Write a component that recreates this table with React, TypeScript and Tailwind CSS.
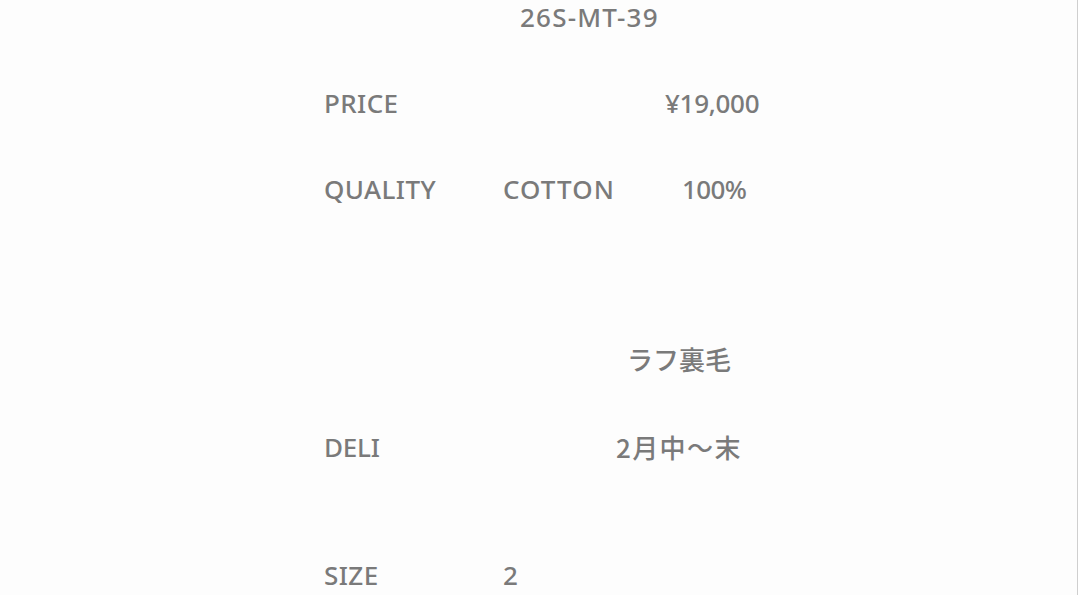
export default function App() {
  const latin = { fontFamily: '"Noto Sans", "Noto Sans CJK JP", sans-serif' }
  const jp = { fontFamily: '"Noto Sans CJK JP", sans-serif' }

  return (
    <div
      className="w-[1078px] h-[595px] bg-[#fdfdfd] border-r border-[#cfcfcf] text-[#7a7a7a] text-[26px] font-medium tracking-[0.4px] leading-none overflow-hidden"
      style={latin}
    >
      <div className="flex flex-col pl-[324px]">
        {/* product code */}
        <div className="h-[34px] flex items-center pl-[196px] tracking-[1.2px]">26S-MT-39</div>

        {/* price */}
        <div className="h-[34px] mt-[52px] flex items-center">
          <span className="w-[341px]">PRICE</span>
          <span className="tracking-[-0.3px]">¥19,000</span>
        </div>

        {/* quality */}
        <div className="h-[34px] mt-[52px] flex items-center">
          <span className="w-[179px]">QUALITY</span>
          <span className="w-[179px] tracking-[1.1px]">COTTON</span>
          <span className="tracking-[-0.6px]">100%</span>
        </div>

        {/* fabric */}
        <div className="h-[34px] mt-[136px] flex items-center pl-[303px] tracking-normal" style={jp}>
          ラフ裏毛
        </div>

        {/* delivery */}
        <div className="h-[34px] mt-[54px] flex items-center">
          <span className="w-[292px] tracking-[-0.2px]">DELI</span>
          <span className="tracking-[1.4px]" style={jp}>2月中〜末</span>
        </div>

        {/* size */}
        <div className="h-[34px] mt-[94px] flex items-center">
          <span className="w-[179px]">SIZE</span>
          <span>2</span>
        </div>
      </div>
    </div>
  )
}
